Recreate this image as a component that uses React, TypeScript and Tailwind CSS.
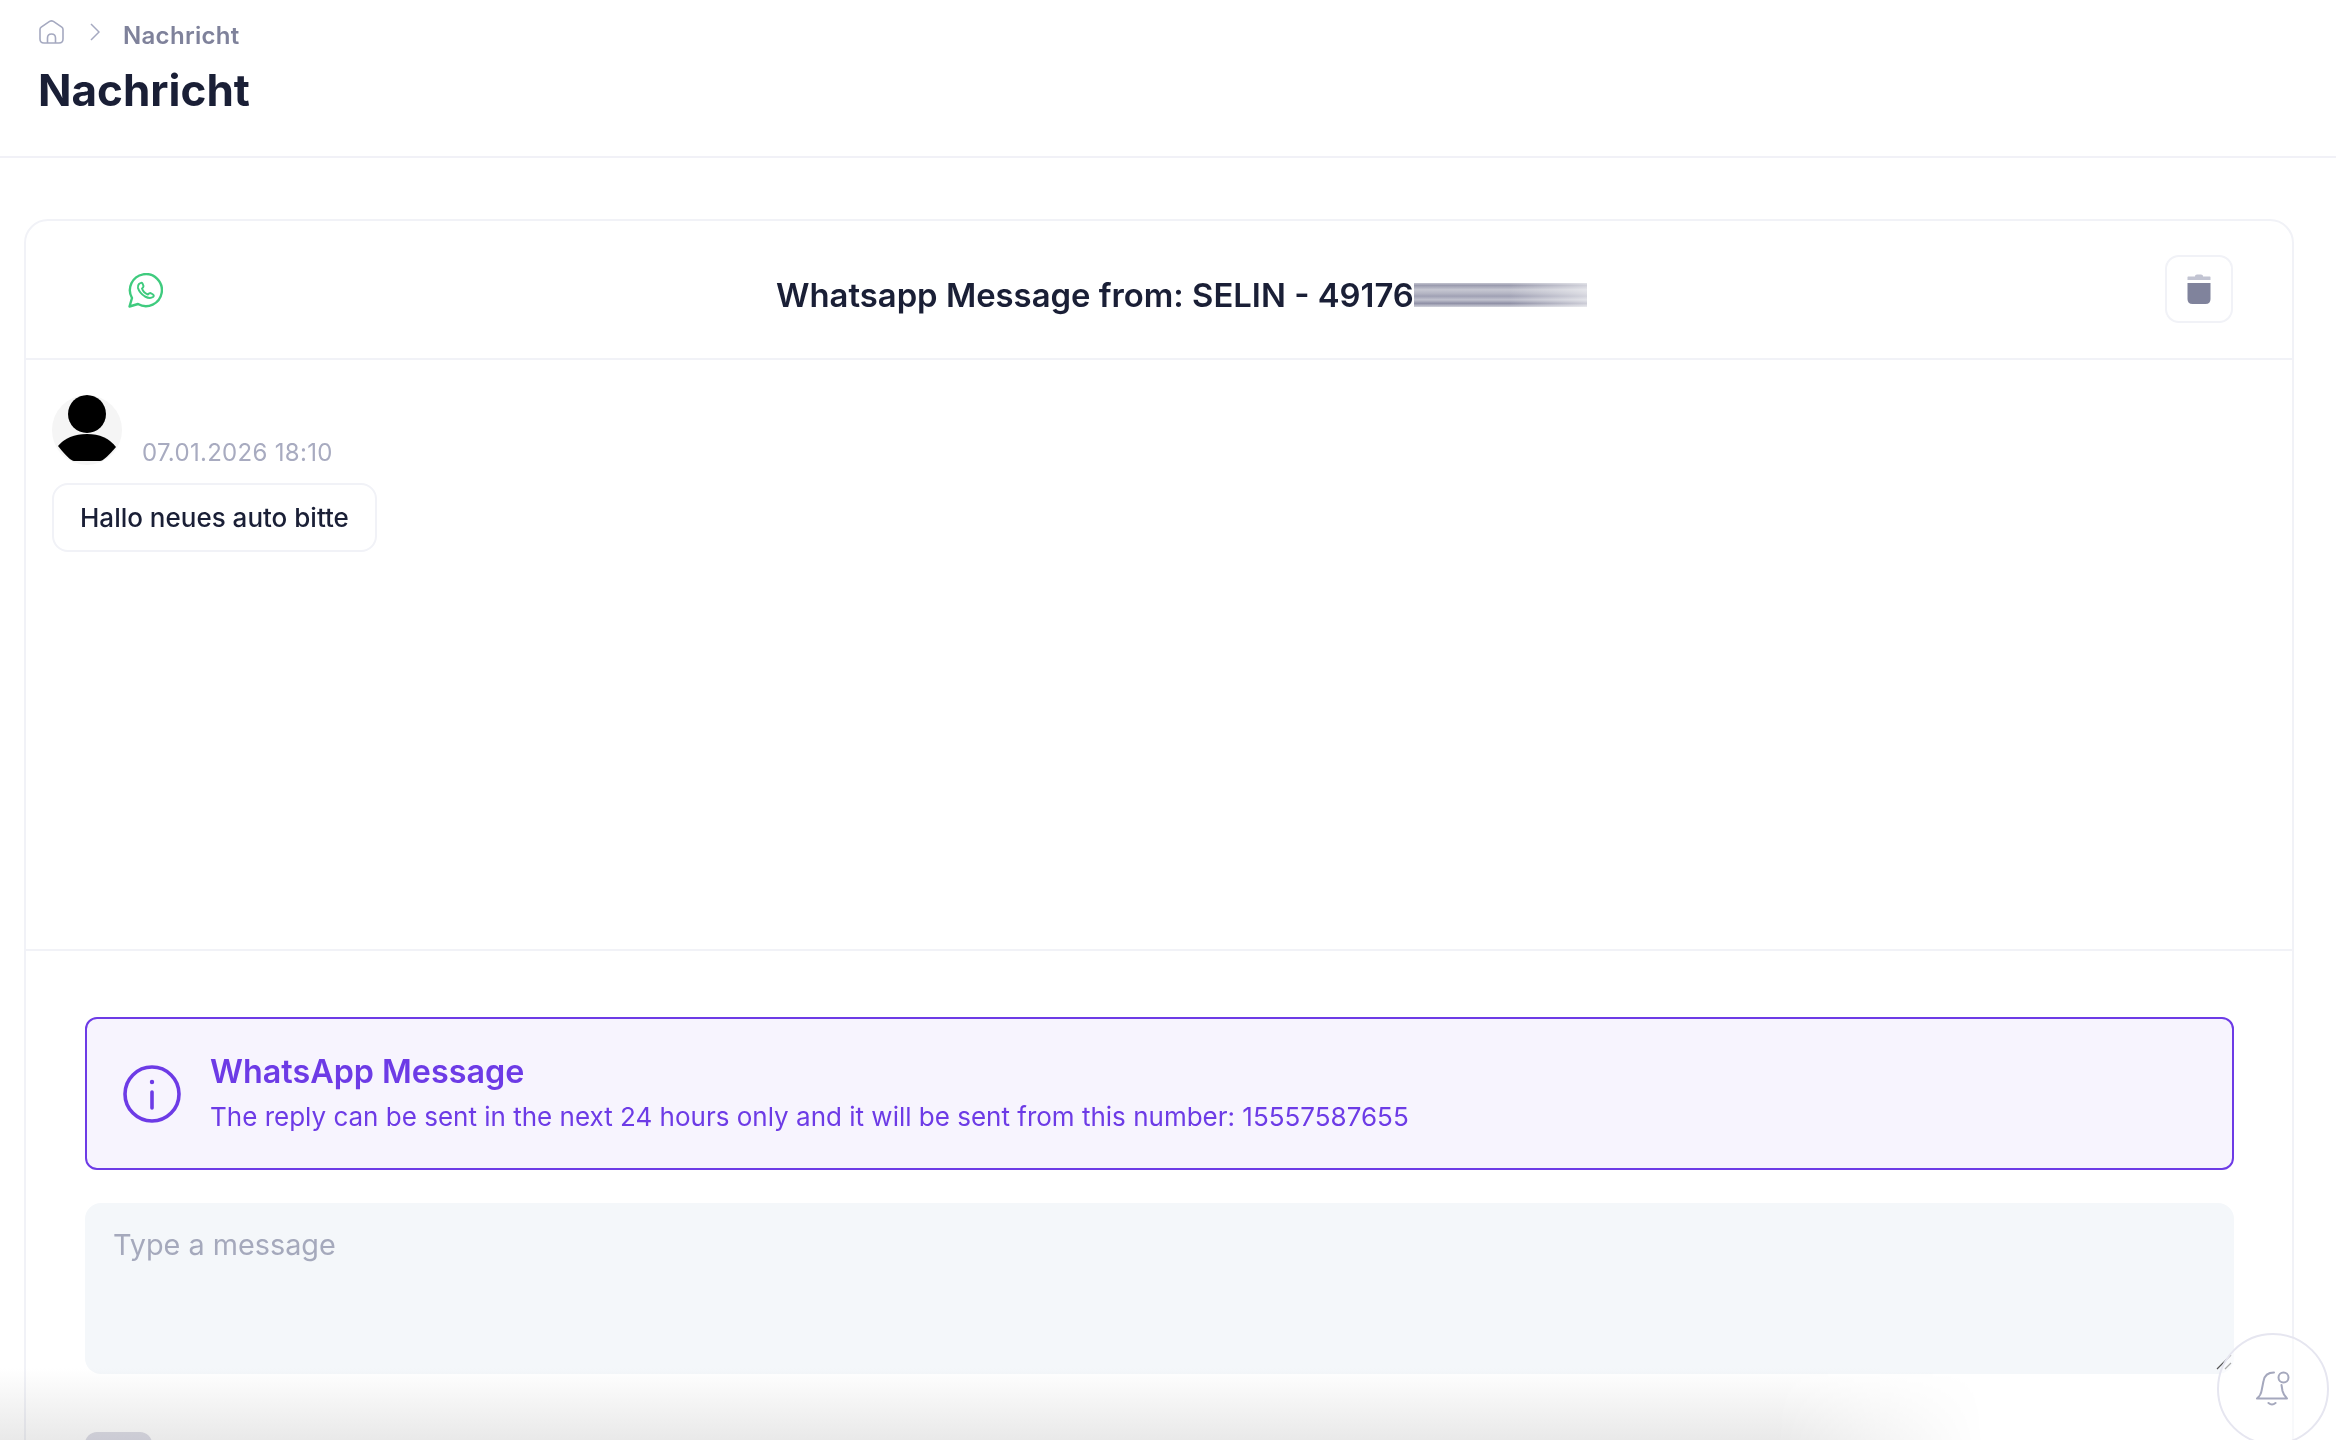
function HomeIcon() {
  return (
    <svg viewBox="0 0 25 24" fill="none" className="h-[24px] w-[25px] text-[#a5a9c0]" stroke="currentColor" strokeWidth="1.6" strokeLinejoin="round">
      <path d="M1 9.5 Q1 8 2.2 7.2 L10.6 1.4 Q12.5 0.4 14.4 1.4 L22.8 7.2 Q24 8 24 9.5 V19 Q24 23 20 23 H5 Q1 23 1 19 Z" />
      <path d="M8.5 23 V18 Q8.5 14 12.5 14 Q16.5 14 16.5 18 V23" />
    </svg>
  );
}

function WhatsappIcon() {
  return (
    <svg viewBox="0 0 35 35" fill="none" className="mt-[2px] h-[35px] w-[35px] shrink-0 text-[#3fcb7e]" stroke="currentColor" strokeWidth="2.4" strokeLinejoin="round">
      <path d="M1.5 33.5 L4 25 A16 16 0 1 1 10 31 Z" />
      <path strokeWidth="2" d="M11 11 Q13.5 9 14.5 10.5 L15.5 13 Q15.5 14.5 14 15.5 Q15.5 20 20 21.5 Q21 20 22.5 20 L25 21.5 Q26.5 22.5 25 24 Q22 26 17 23.5 Q11.5 20 10 15 Q9.5 12.5 11 11 Z" />
    </svg>
  );
}

function TrashIcon() {
  return (
    <svg viewBox="0 0 24 30" className="h-[30px] w-[24px]">
      <path d="M8 2 Q8 0.5 10 0.5 H14 Q16 0.5 16 2 V3 H8 Z" fill="#c2c4d2" />
      <path d="M1 2.6 H23 Q23.5 2.6 23.5 3 V6 H0.5 V3 Q0.5 2.6 1 2.6 Z" fill="#c2c4d2" />
      <path d="M0.5 9 H23.5 V25 Q23.5 30 18.5 30 H5.5 Q0.5 30 0.5 25 Z" fill="#80839c" />
    </svg>
  );
}

function InfoIcon() {
  return (
    <svg viewBox="0 0 58 58" fill="none" className="h-[58px] w-[58px] shrink-0 text-[#6d3be6]" stroke="currentColor" strokeWidth="3.6" strokeLinecap="round">
      <circle cx="29" cy="29" r="27" />
      <path d="M29 27 V43" />
      <circle cx="29" cy="17" r="1" fill="currentColor" strokeWidth="2.4" />
    </svg>
  );
}

function BellIcon() {
  return (
    <svg viewBox="0 0 34 36" fill="none" className="h-[36px] w-[34px] text-[#a5a8bd]" stroke="currentColor" strokeWidth="2" strokeLinecap="round" strokeLinejoin="round">
      <path d="M18 1.5 Q9 1.5 7.5 10 L5.5 20 Q5 24 1 27.5 H31 Q27.5 24 26.5 20 L25.5 14" />
      <path d="M12.5 32 Q16 35 19.5 32" />
      <circle cx="27.5" cy="6.5" r="5" />
    </svg>
  );
}

function Avatar() {
  return (
    <svg viewBox="0 0 70 70" className="h-[70px] w-[70px] shrink-0 rounded-full bg-[#f5f5f5]">
      <circle cx="35" cy="19" r="19" fill="#000" />
      <path d="M6 51 Q16 39 35 39 Q54 39 64 52 Q52 66 48 66 H22 Q18 66 6 51 Z" fill="#000" />
    </svg>
  );
}

export default function App() {
  return (
    <div className="relative flex h-screen w-full flex-col overflow-hidden bg-white font-['Inter',sans-serif] text-[#1a1f36]">
      {/* Page header */}
      <header className="h-[158px] shrink-0 border-b-2 border-[#f1f1f7] pt-[20px] pl-[39px]">
        <div className="flex h-[24px] items-center">
          <HomeIcon />
          <svg viewBox="0 0 10 18" fill="none" className="ml-[26px] h-[18px] w-[10px] text-[#a5a9c0]" stroke="currentColor" strokeWidth="1.5">
            <path d="M1 1 L9 9 L1 17" />
          </svg>
          <span className="mt-[8px] ml-[23px] text-[24px] font-semibold tracking-[0.3px] text-[#7f829b]">Nachricht</span>
        </div>
        <h1 className="mt-[18px] -ml-[1px] text-[44px] leading-[56px] font-bold">Nachricht</h1>
      </header>

      {/* Message card */}
      <div className="mt-[61px] mr-[42px] ml-[24px] flex flex-1 flex-col rounded-t-[24px] border-2 border-[#f1f2f7]">
        <div className="flex h-[139px] shrink-0 items-center border-b-2 border-[#f1f2f7] pr-[59px] pl-[102px]">
          <WhatsappIcon />
          <h2 className="mt-[11px] ml-[613px] flex items-center text-[32.85px] leading-[40px] font-semibold whitespace-nowrap">
            Whatsapp Message from: SELIN - 49176
            <span className="h-[24px] w-[173px] bg-[linear-gradient(90deg,transparent_55%,rgba(255,255,255,0.55)),linear-gradient(180deg,#c4c5d0_0%,#9a9bae_10%,#c6c7d2_28%,#b2b3c2_45%,#a0a1b4_55%,#c2c3cf_70%,#8f90a6_85%,#d2d3db_100%)]" />
          </h2>
          <button className="-mt-[2px] ml-auto flex h-[68px] w-[68px] items-center justify-center rounded-[14px] border-2 border-[#f1f2f7]">
            <TrashIcon />
          </button>
        </div>

        <div className="h-[591px] shrink-0 border-b-2 border-[#f1f2f7] pt-[35px] pl-[26px]">
          <div className="flex items-end gap-[20px]">
            <Avatar />
            <span className="-mb-[3px] text-[24px] leading-[30px] tracking-[0.3px] text-[#a8abc0]">07.01.2026 18:10</span>
          </div>
          <div className="mt-[18px] w-fit rounded-[16px] border-2 border-[#f1f2f7] px-[26px] pt-[17px] pb-[16px] text-[26px] leading-[32px] font-medium">
            Hallo neues auto bitte
          </div>
        </div>

        <div className="pt-[66px] pr-[58px] pl-[59px]">
          <div className="flex h-[153px] items-center gap-[29px] rounded-[12px] border-2 border-[#6d3be6] bg-[#f7f4fe] pl-[36px] text-[#6d3be6]">
            <InfoIcon />
            <div className="pb-[2px]">
              <div className="text-[32.3px] leading-[40px] font-semibold">WhatsApp Message</div>
              <div className="mt-[8px] text-[26px] leading-[34px]">
                The reply can be sent in the next 24 hours only and it will be sent from this number: 15557587655
              </div>
            </div>
          </div>
          <div className="relative mt-[33px]">
            <textarea
              placeholder="Type a message"
              className="block h-[171px] w-full resize-none rounded-[16px] bg-[#f4f7fa] px-[28px] py-[24px] text-[28.8px] leading-[36px] outline-none placeholder:text-[#a5a9bc]"
            />
            <svg viewBox="0 0 16 16" fill="none" className="absolute right-[2px] bottom-[4px] h-[16px] w-[16px] text-[#555]" stroke="currentColor" strokeWidth="1.2">
              <path d="M1 15 L15 1 M9 15 L15 9" />
            </svg>
          </div>
          <div className="mt-[58px] h-[40px] w-[67px] rounded-[12px] bg-[#dfdfe8]" />
        </div>
      </div>

      {/* Fade at the bottom of the window */}
      <div className="pointer-events-none absolute right-0 bottom-0 left-0 h-[72px] bg-gradient-to-t from-[#e9e9e9] to-white mix-blend-multiply [mask-image:linear-gradient(to_right,black_76%,transparent_85%)]" />

      {/* Notification bubble */}
      <div className="absolute top-[1333px] left-[2217px] flex h-[112px] w-[112px] items-center justify-center rounded-full border-2 border-[#e6e6f0] bg-white/50">
        <BellIcon />
      </div>
    </div>
  );
}
